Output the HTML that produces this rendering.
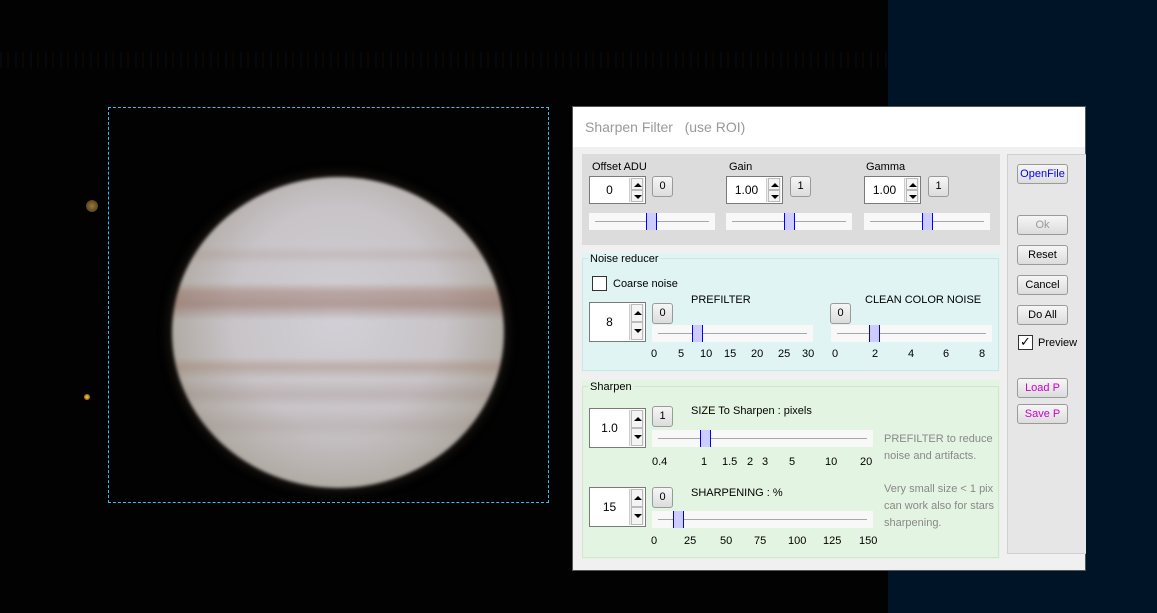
<!DOCTYPE html>
<html><head><meta charset="utf-8"><style>
*{margin:0;padding:0;box-sizing:border-box}
body{width:1157px;height:613px;overflow:hidden;background:#020202;position:relative;font-family:"Liberation Sans",sans-serif;font-size:11px;color:#000}
.a{position:absolute}
.navy{left:888px;top:0;width:269px;height:613px;background:#001428}
.roi{left:108px;top:107px;width:441px;height:396px;border:1px dashed #3cbcf0}
.planet{left:172px;top:177px;width:332px;height:311px;border-radius:50%;
background:
linear-gradient(180deg,transparent 0%,transparent 22%,rgba(150,110,100,.15) 25%,transparent 28%,transparent 34%,rgba(140,90,70,.35) 37%,rgba(130,80,65,.4) 41%,transparent 46%,transparent 58%,rgba(150,105,80,.3) 61%,transparent 65%,rgba(140,110,100,.2) 70%,transparent 74%,rgba(140,115,105,.15) 80%,transparent 84%),
radial-gradient(ellipse at 50% 45%,#d2d0d6 0%,#c8c4c8 45%,#b2aca6 70%,#847a6c 88%,#3a3228 100%);
box-shadow:0 0 10px 4px rgba(50,42,34,.5);filter:blur(1.5px)}
.moon1{left:86px;top:200px;width:12px;height:12px;border-radius:50%;background:radial-gradient(#9a7a38,#5a4420 70%,transparent);}
.moon2{left:84px;top:394px;width:6px;height:6px;border-radius:50%;background:radial-gradient(#ffd040,#a06010 70%,transparent)}
.dlg{left:572px;top:106px;width:514px;height:465px;background:#f0f0f0;border:1px solid #555}
.title{left:0;top:0;width:512px;height:40px;background:#fff;color:#999;font-size:14px;padding:12px 0 0 12px}
.btn{position:absolute;background:linear-gradient(#f6f6f6,#dcdcdc);border:1px solid #9a9a9a;border-radius:3px;text-align:center;font-size:11px;line-height:18px}
.spin{position:absolute;background:#fff;border:1px solid #7a7a7a}
.spin .v{position:absolute;left:0;right:16px;text-align:center;top:50%;margin-top:-7px;font-size:12px}
.spin .ar{position:absolute;right:1px;top:1px;bottom:1px;width:15px;border-left:1px solid #ccc;background:#eee}
.spin .ar i{position:absolute;left:1px;right:1px;height:50%;border:1px solid #bbb;background:#f4f4f4}
.spin .ar i:after{content:"";position:absolute;left:2px;border-left:4px solid transparent;border-right:4px solid transparent}
.up{top:0}.up:after{top:35%;border-bottom:4px solid #000}
.dn{bottom:0}.dn:after{top:35%;border-top:4px solid #000}
.sl{position:absolute;background:#f8f8f8;height:17px}
.sl:before{content:"";position:absolute;left:6px;right:6px;top:8px;height:1px;background:#a8a8a8}
.th{position:absolute;top:0;width:11px;height:17px;background:#ccccff;border-left:1px solid #00f;border-right:1px solid #00f}
.t{position:absolute;white-space:nowrap;font-size:11px}
.g{color:#888}
.rb{position:absolute;left:1017px;width:51px;height:20px;background:linear-gradient(#f6f6f6,#dcdcdc);border:1px solid #9a9a9a;border-radius:3px;text-align:center;line-height:18px;font-size:11px}
.cb{position:absolute;width:15px;height:15px;background:#fff;border:1px solid #333}
</style></head><body>
<div class="a navy"></div>
<div class="a" style="left:0;top:52px;width:888px;height:16px;background:repeating-linear-gradient(90deg,rgba(40,40,110,.12) 0 2px,transparent 2px 7px,rgba(110,20,20,.1) 7px 9px,transparent 9px 15px)"></div>
<div class="a planet"></div>
<div class="a moon1"></div><div class="a moon2"></div>
<div class="a roi"></div>

<div class="a dlg"><div class="a title">Sharpen Filter &nbsp;&nbsp;(use ROI)</div></div>

<div class="a" style="left:582px;top:154px;width:418px;height:91px;background:#dcdcdc"></div>
<div class="t" style="left:592px;top:161px">Offset ADU</div>
<div class="t" style="left:729px;top:161px">Gain</div>
<div class="t" style="left:866px;top:161px">Gamma</div>
<div class="spin" style="left:589px;top:176px;width:57px;height:28px"><div class="v">0</div><div class="ar"><i class="up"></i><i class="dn"></i></div></div>
<div class="btn" style="left:652px;top:176px;width:21px;height:21px">0</div>
<div class="spin" style="left:726px;top:176px;width:57px;height:28px"><div class="v">1.00</div><div class="ar"><i class="up"></i><i class="dn"></i></div></div>
<div class="btn" style="left:790px;top:176px;width:21px;height:21px">1</div>
<div class="spin" style="left:864px;top:176px;width:57px;height:28px"><div class="v">1.00</div><div class="ar"><i class="up"></i><i class="dn"></i></div></div>
<div class="btn" style="left:928px;top:176px;width:21px;height:21px">1</div>
<div class="sl" style="left:589px;top:213px;width:126px"><div class="th" style="left:57px"></div></div>
<div class="sl" style="left:726px;top:213px;width:126px"><div class="th" style="left:58px"></div></div>
<div class="sl" style="left:864px;top:213px;width:126px"><div class="th" style="left:58px"></div></div>

<div class="a" style="left:582px;top:253px;width:418px;height:119px;background:#e0f4f4"></div>
<div class="a" style="left:582px;top:258px;width:417px;height:113px;border:1px solid #cfe4e4"></div>
<div class="t" style="left:588px;top:253px;background:#e0f4f4;padding:0 2px">Noise reducer</div>
<div class="cb" style="left:592px;top:276px"></div>
<div class="t" style="left:613px;top:278px">Coarse noise</div>
<div class="spin" style="left:589px;top:302px;width:57px;height:40px"><div class="v">8</div><div class="ar"><i class="up"></i><i class="dn"></i></div></div>
<div class="btn" style="left:652px;top:303px;width:21px;height:21px">0</div>
<div class="t" style="left:691px;top:294px">PREFILTER</div>
<div class="sl" style="left:652px;top:325px;width:161px"><div class="th" style="left:40px"></div></div>
<div class="t" style="left:651px;top:348px">0</div><div class="t" style="left:678px;top:348px">5</div><div class="t" style="left:700px;top:348px">10</div><div class="t" style="left:724px;top:348px">15</div><div class="t" style="left:751px;top:348px">20</div><div class="t" style="left:778px;top:348px">25</div><div class="t" style="left:802px;top:348px">30</div>
<div class="btn" style="left:830px;top:303px;width:21px;height:21px">0</div>
<div class="t" style="left:865px;top:294px">CLEAN COLOR NOISE</div>
<div class="sl" style="left:831px;top:325px;width:161px"><div class="th" style="left:38px"></div></div>
<div class="t" style="left:832px;top:348px">0</div><div class="t" style="left:872px;top:348px">2</div><div class="t" style="left:908px;top:348px">4</div><div class="t" style="left:943px;top:348px">6</div><div class="t" style="left:979px;top:348px">8</div>

<div class="a" style="left:582px;top:380px;width:418px;height:179px;background:#e4f4e2"></div>
<div class="a" style="left:582px;top:386px;width:417px;height:172px;border:1px solid #d4e4d2"></div>
<div class="t" style="left:588px;top:381px;background:#e4f4e2;padding:0 2px">Sharpen</div>
<div class="spin" style="left:589px;top:408px;width:57px;height:40px"><div class="v">1.0</div><div class="ar"><i class="up"></i><i class="dn"></i></div></div>
<div class="btn" style="left:652px;top:406px;width:21px;height:21px">1</div>
<div class="t" style="left:691px;top:405px">SIZE To Sharpen : pixels</div>
<div class="sl" style="left:652px;top:430px;width:221px"><div class="th" style="left:48px"></div></div>
<div class="t" style="left:652px;top:456px">0.4</div><div class="t" style="left:701px;top:456px">1</div><div class="t" style="left:722px;top:456px">1.5</div><div class="t" style="left:747px;top:456px">2</div><div class="t" style="left:762px;top:456px">3</div><div class="t" style="left:789px;top:456px">5</div><div class="t" style="left:825px;top:456px">10</div><div class="t" style="left:860px;top:456px">20</div>
<div class="t g" style="left:884px;top:431px;line-height:17px">PREFILTER to reduce<br>noise and artifacts.</div>
<div class="t g" style="left:884px;top:481px;line-height:17px">Very small size &lt; 1 pix<br>can work also for stars<br>sharpening.</div>
<div class="spin" style="left:589px;top:487px;width:57px;height:40px"><div class="v">15</div><div class="ar"><i class="up"></i><i class="dn"></i></div></div>
<div class="btn" style="left:652px;top:487px;width:21px;height:21px">0</div>
<div class="t" style="left:691px;top:487px">SHARPENING : %</div>
<div class="sl" style="left:652px;top:511px;width:221px"><div class="th" style="left:21px"></div></div>
<div class="t" style="left:651px;top:535px">0</div><div class="t" style="left:684px;top:535px">25</div><div class="t" style="left:720px;top:535px">50</div><div class="t" style="left:754px;top:535px">75</div><div class="t" style="left:788px;top:535px">100</div><div class="t" style="left:823px;top:535px">125</div><div class="t" style="left:859px;top:535px">150</div>

<div class="a" style="left:1007px;top:154px;width:79px;height:400px;background:#e6e6e6;border:1px solid #d0d0d0;border-right:none"></div>
<div class="rb" style="top:164px;color:#00f">OpenFile</div>
<div class="rb" style="top:215px;color:#999">Ok</div>
<div class="rb" style="top:245px">Reset</div>
<div class="rb" style="top:275px">Cancel</div>
<div class="rb" style="top:305px">Do All</div>
<div class="cb" style="left:1018px;top:335px;font-size:13px;line-height:12px;text-align:center">✓</div>
<div class="t" style="left:1038px;top:337px">Preview</div>
<div class="rb" style="top:378px;color:#c0c">Load P</div>
<div class="rb" style="top:404px;color:#c0c">Save P</div>
</body></html>
